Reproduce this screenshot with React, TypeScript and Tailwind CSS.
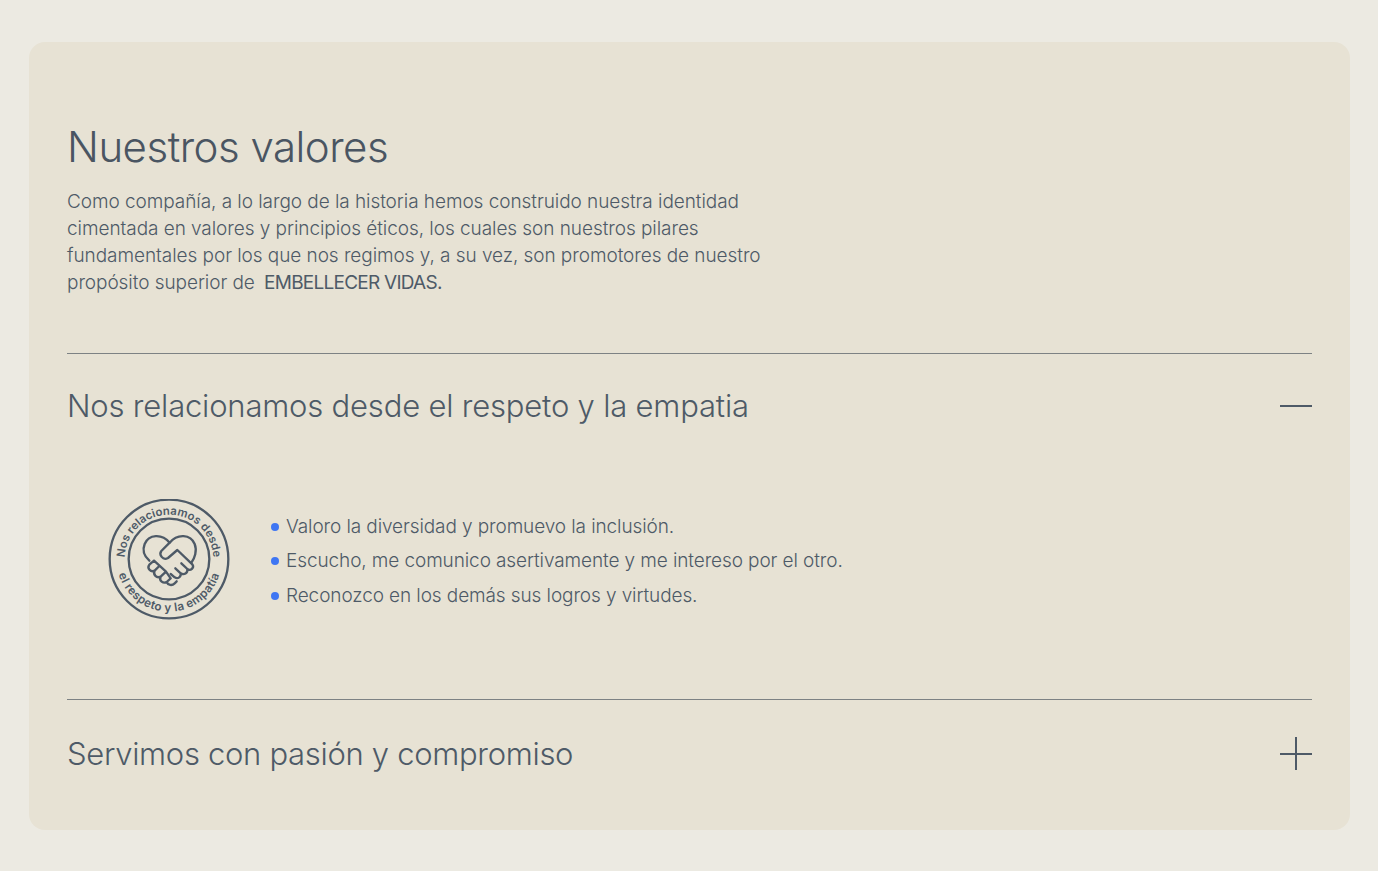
const font = { fontFamily: "Inter, sans-serif" }

function Badge() {
  return (
    <svg viewBox="54 57 366 366" className="h-[122px] w-[122px] shrink-0" fill="none" stroke="#4e5a67" strokeWidth="7" strokeLinecap="round" strokeLinejoin="round">
      <circle cx="237" cy="237" r="178" />
      <circle cx="237" cy="237" r="121" />
      <defs>
        <path id="arcTop" d="M 237 370 A 133 133 0 0 1 237 104 A 133 133 0 0 1 237 370" />
        <path id="arcBottom" d="M 237 79 A 158 158 0 0 0 237 395 A 158 158 0 0 0 237 79" />
      </defs>
      <text fontSize="34" fontWeight="600" letterSpacing="0.2" fill="#4e5a67" stroke="none" style={font}>
        <textPath href="#arcTop" startOffset="50%" textAnchor="middle">Nos relacionamos desde</textPath>
      </text>
      <text fontSize="35" fontWeight="600" letterSpacing="1" fill="#4e5a67" stroke="none" style={font}>
        <textPath href="#arcBottom" startOffset="50%" textAnchor="middle">el respeto y la empatía</textPath>
      </text>
      <g transform="translate(144 150)">
        <path d="M34 92 C18 78 12 62 20 42 C32 12 72 10 95 38 C118 10 158 12 170 42 C178 62 170 85 160 98" />
        <path d="M95 38 L70 63 C62 73 74 93 90 84 L118 60 L163 103 C170 113 158 124 148 117 L130 100 M148 117 C150 130 138 136 128 130 L112 115 M128 130 C130 140 120 148 110 142 L98 132" />
        <path d="M48 92 L34 104 C26 114 38 128 50 122 L64 108 M48 92 L84 125 M50 122 C44 134 56 146 68 140 L84 125 M84 125 L98 145 M68 140 C62 152 76 162 86 156 L98 145 M86 156 C90 166 102 168 110 160 L116 154" />
      </g>
    </svg>
  )
}

export default function App() {
  return (
    <div className="min-h-[871px] bg-[#eceae2] pt-[42px] pr-[28px] pb-[41px] pl-[29px]" style={font}>
      <div className="h-[788px] rounded-2xl bg-[#e7e2d4] px-[38px] pt-[78px] text-[#4e5a67]">
        <h2 className="text-[42px] leading-[54px] font-light tracking-[-0.5px] text-[#4a5562]">Nuestros valores</h2>
        <p className="mt-[14px] w-[720px] text-[19px] leading-[27px] font-light tracking-[-0.06px]">
          Como compañía, a lo largo de la historia hemos construido nuestra identidad cimentada en valores y principios éticos, los cuales son nuestros pilares fundamentales por los que nos regimos y, a su vez, son promotores de nuestro propósito superior de <span className="ml-1 font-normal tracking-[-0.75px]">EMBELLECER VIDAS.</span>
        </p>

        <div className="mt-[57px] border-t border-[#7d8284]">
          <div className="flex h-[105px] items-center justify-between">
            <h3 className="text-[31px] font-light tracking-[-0.19px]">Nos relacionamos desde el respeto y la empatia</h3>
            <span className="mb-[2px] h-[2px] w-8 bg-[#4e5a67]" />
          </div>
          <div className="flex items-center gap-[41px] pl-[41px] pt-[40px]">
            <Badge />
            <ul className="mt-[2px] flex flex-col gap-[7px] text-[19px] leading-[27.5px] font-light tracking-[-0.1px]">
              {["Valoro la diversidad y promuevo la inclusión.", "Escucho, me comunico asertivamente y me intereso por el otro.", "Reconozco en los demás sus logros y virtudes."].map((item) => (
                <li key={item} className="flex items-center gap-[7px]">
                  <span className="h-2 w-2 rounded-full bg-[#3f76f3]" />
                  {item}
                </li>
              ))}
            </ul>
          </div>
        </div>

        <div className="mt-[78px] flex h-[109px] items-center justify-between border-t border-[#7d8284]">
          <h3 className="text-[31px] font-light tracking-[-0.31px]">Servimos con pasión y compromiso</h3>
          <span className="relative h-8 w-8">
            <span className="absolute top-[15px] left-0 h-[2px] w-8 bg-[#4e5a67]" />
            <span className="absolute -top-px left-[15px] h-[33px] w-[2px] bg-[#4e5a67]" />
          </span>
        </div>
      </div>
    </div>
  )
}
